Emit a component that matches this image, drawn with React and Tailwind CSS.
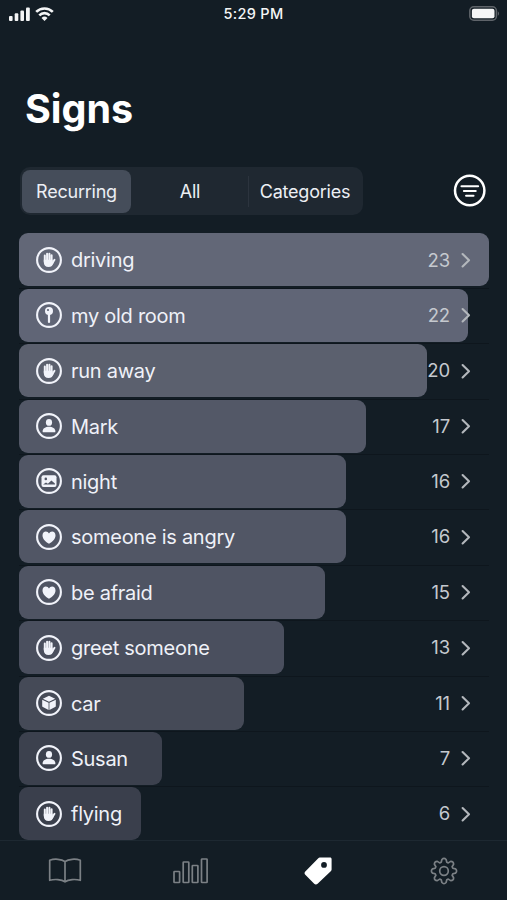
import React, { useState } from 'react';

const signs = [
  { name: 'driving', count: 23, type: 'action', color: 'bg-[#626777]' },
  { name: 'my old room', count: 22, type: 'place', color: 'bg-[#606576]' },
  { name: 'run away', count: 20, type: 'action', color: 'bg-[#5b606e]' },
  { name: 'Mark', count: 17, type: 'person', color: 'bg-[#535867]' },
  { name: 'night', count: 16, type: 'scene', color: 'bg-[#515665]' },
  { name: 'someone is angry', count: 16, type: 'emotion', color: 'bg-[#515665]' },
  { name: 'be afraid', count: 15, type: 'emotion', color: 'bg-[#4f5463]' },
  { name: 'greet someone', count: 13, type: 'action', color: 'bg-[#4a4f5e]' },
  { name: 'car', count: 11, type: 'object', color: 'bg-[#454a57]' },
  { name: 'Susan', count: 7, type: 'person', color: 'bg-[#3c414e]' },
  { name: 'flying', count: 6, type: 'action', color: 'bg-[#3a3f4c]' },
];

const maxCount = 23;

const glyphs = {
  action: (
    <g stroke="currentColor" strokeLinecap="round" fill="none">
      <path d="M8.8 8.400v6M11.100 6.700v7M13.400 6.700v7M15.600 8.200v6" strokeWidth="2" />
      <path d="M18.500 12.700l-2.300 3.900" strokeWidth="1.900" />
      <path d="M7.800 12.800h8.800v2.800l1.200-.4c-1 3.200-2.400 4.900-5.200 4.900-3.100 0-4.800-1.800-4.800-4.900z" fill="currentColor" stroke="none" />
    </g>
  ),
  place: (
    <g>
      <circle cx="13" cy="9" r="4" fill="currentColor" />
      <circle cx="12" cy="8" r="1.100" fill="#606576" />
      <path d="M13 12v8" stroke="currentColor" strokeWidth="2.200" strokeLinecap="round" />
    </g>
  ),
  person: (
    <g fill="currentColor">
      <ellipse cx="13" cy="9.400" rx="3.100" ry="3.400" />
      <path d="M6.600 18.400c0-2.900 2.900-4.600 6.400-4.600s6.400 1.700 6.400 4.600c0 .6-.3.900-.9.900H7.500c-.6 0-.9-.3-.9-.9z" />
    </g>
  ),
  scene: (
    <g>
      <rect x="5.500" y="7.200" width="15" height="11.800" rx="2" fill="currentColor" />
      <circle cx="9.800" cy="10.900" r="1.300" fill="#515665" />
      <path d="M7.100 16.600l2.900-2.100 1.900 1.200 3.500-3.300 3.500 3.100v1.100z" fill="#515665" />
    </g>
  ),
  emotion: (
    <path
      d="M13 19.800c-3.300-2.100-6.500-4.900-6.500-8.400 0-2.200 1.500-3.900 3.400-3.900 1.300 0 2.500.7 3.100 2 .6-1.300 1.800-2 3.100-2 1.900 0 3.400 1.700 3.400 3.900 0 3.500-3.200 6.300-6.500 8.400z"
      fill="currentColor"
    />
  ),
  object: (
    <g fill="currentColor">
      <path d="M13 5.800l6.200 3L13 11.800 6.800 8.800z" />
      <path d="M6.200 9.700l6.400 3v7.300l-5.700-2.900c-.4-.2-.7-.6-.7-1.100z" />
      <path d="M19.800 9.700l-6.400 3v7.300l5.700-2.900c.4-.2.7-.6.7-1.100z" />
    </g>
  ),
};

const SignIcon = ({ type }) => (
  <svg width="26" height="26" viewBox="0 0 26 26" className="shrink-0 text-[#f1f3fa]">
    <circle cx="13" cy="13" r="11.900" fill="none" stroke="currentColor" strokeWidth="2.100" />
    {glyphs[type]}
  </svg>
);

const StatusBar = () => (
  <div className="grid grid-cols-3 items-center h-[27px] pl-[9px] pr-[7px] text-[#f4f5f6]">
    <div className="flex items-center gap-[5px]">
      <svg width="21" height="14" viewBox="0 0 21 14" fill="currentColor">
        <rect x="0" y="9" width="3.600" height="5" rx="1" />
        <rect x="5.700" y="6.300" width="3.600" height="7.700" rx="1" />
        <rect x="11.400" y="3.500" width="3.600" height="10.500" rx="1" />
        <rect x="17" y="0.500" width="3.800" height="13.500" rx="1" />
      </svg>
      <svg width="19" height="14" viewBox="0 0 19 14" fill="none" stroke="currentColor" strokeWidth="2.600">
        <path d="M1.200 4.900a11.700 11.700 0 0 1 16.600 0" />
        <path d="M4.300 8.300a7.400 7.400 0 0 1 10.400 0" />
        <path d="M9.500 14l-3-3.100a4.300 4.300 0 0 1 6 0z" fill="currentColor" stroke="none" />
      </svg>
    </div>
    <span className="-ml-[2px] text-center text-[14.5px] font-medium tracking-[0.3px]">5:29 PM</span>
    <svg width="31" height="15" viewBox="0 0 31 15" className="justify-self-end">
      <rect x="0.800" y="0.800" width="26.600" height="13.400" rx="4" fill="none" stroke="#5f646a" strokeWidth="1.500" />
      <rect x="2.900" y="2.700" width="22.600" height="9.600" rx="2" fill="currentColor" />
      <path d="M28.800 5.200c1.600.7 1.600 3.900 0 4.600z" fill="#5f646a" />
    </svg>
  </div>
);

const tabs = ['Recurring', 'All', 'Categories'];

const App = () => {
  const [tab, setTab] = useState('Recurring');

  return (
    <div className="flex flex-col w-full h-[900px] overflow-hidden bg-[#131d25] font-['Inter','Liberation_Sans',sans-serif]">
      <StatusBar />

      <h1 className="mt-[56px] pl-[25px] text-[39.5px] leading-[52px] font-bold tracking-[0px] text-white">Signs</h1>

      {/* Segmented control */}
      <div className="flex items-center justify-between mt-[32px] pl-[20px] pr-[21px] h-[48px]">
        <div className="grid grid-cols-[109px_118px_112px] items-center h-[48px] w-[343px] p-[2px] rounded-[10px] bg-[#1f2831]">
          {tabs.map((name) => (
            <button
              key={name}
              onClick={() => setTab(name)}
              className={`h-[43px] rounded-[8px] text-[18px] tracking-[-0.22px] text-[#eceff4] ${
                tab === name ? 'bg-[#454d5a]' : ''
              } ${name === 'All' ? 'relative after:absolute after:right-0 after:top-[6px] after:h-[31px] after:w-px after:bg-[#2c343e]' : ''}`}
            >
              {name}
            </button>
          ))}
        </div>
        <button className="-mt-[2px]">
          <svg width="33" height="33" viewBox="0 0 33 33" fill="none" stroke="white" strokeLinecap="round">
            <circle cx="16.700" cy="16.500" r="14.700" strokeWidth="2.500" />
            <path d="M8.500 12.200h16.600M10.900 17h11.800M13.100 21.800h7.400" strokeWidth="2.100" />
          </svg>
        </button>
      </div>

      {/* Signs with their frequency bars */}
      <div className="flex-1 min-h-0 mt-[18.400px] pl-[19px] pr-[18.500px]">
        {signs.map((sign) => (
          <div key={sign.name} className="grid h-[55.4px] grid-rows-[53px] border-b border-[#0e161d]">
            <div
              className={`col-start-1 row-start-1 rounded-[9px] ${sign.color}`}
              style={{ width: `${(sign.count / maxCount) * 100}%` }}
            />
            <div className="col-start-1 row-start-1 flex items-center pl-[17px] pr-[17.500px]">
              <SignIcon type={sign.type} />
              <span className="ml-[9px] mt-px flex-1 text-[20px] tracking-[-0.27px] text-[#eff1f8]">{sign.name}</span>
              <span className="mt-px text-[18.500px] tracking-[-0.1px] text-[#c5c9cf]">{sign.count}</span>
              <svg width="10" height="16" viewBox="0 0 10 16" className="ml-[11px] shrink-0" fill="none" stroke="#b3b7bc" strokeWidth="2.100">
                <path d="M1.600 2l6.400 6.200-6.400 6.200" strokeLinecap="round" strokeLinejoin="round" />
              </svg>
            </div>
          </div>
        ))}
      </div>

      {/* Tab bar */}
      <nav className="grid grid-cols-4 h-[60px] shrink-0 border-t border-[#1d2831] bg-[#131d25] text-[#7b8085]">
        <button className="flex justify-center pt-[17px] pl-[3px]">
          <svg width="34" height="26" viewBox="0 0 34 26" fill="none" stroke="currentColor" strokeWidth="1.700" strokeLinejoin="round">
            <path d="M17 3.700C13.500 .9 6.500 .6 1.700 2.200V22.300C6.500 21 13.500 21.200 17 23.800c3.500-2.600 10.500-2.800 15.300-1.500V2.200C27.500 .6 20.500 .9 17 3.700zM17 3.700V23.800" />
          </svg>
        </button>
        <button className="flex justify-center pt-[16px] pl-[2px]">
          <svg width="36" height="27" viewBox="0 0 36 27" fill="none" stroke="currentColor" strokeWidth="1.700">
            <rect x="1" y="14.500" width="5.600" height="11" rx="0.600" />
            <rect x="10.200" y="5" width="5.600" height="20.500" rx="0.600" />
            <rect x="19.300" y="8.500" width="5.600" height="17" rx="0.600" />
            <rect x="28.500" y="2" width="5.600" height="23.500" rx="0.600" />
          </svg>
        </button>
        <button className="flex justify-center pt-[16px] pl-[2px] text-white">
          <svg width="28" height="28" viewBox="0 0 28 28">
            <path
              fillRule="evenodd"
              fill="currentColor"
              d="M15.800.6h10.300c.9 0 1.500.6 1.500 1.500v10.300c0 .6-.2 1.100-.6 1.500L13.600 26.700c-1 1-2.400 1-3.400 0l-8.900-8.900c-1-1-1-2.400 0-3.400L14.300 1.200c.4-.4.900-.6 1.500-.6zM20 5a2.900 2.900 0 1 0 0 5.800A2.900 2.900 0 0 0 20 5z"
            />
          </svg>
        </button>
        <button className="flex justify-center pt-[16px]">
          <svg width="28" height="28" viewBox="0 0 28 28" fill="none" stroke="currentColor" strokeWidth="1.700" strokeLinejoin="round">
            <path d="M11.900 2.500Q14 .3 16.100 2.500L16.800 5.200 18.300 5.900 20.700 4.400Q23.700 4.300 23.600 7.300L22.100 9.700 22.800 11.200 25.500 11.900Q27.700 14 25.500 16.100L22.800 16.800 22.100 18.300 23.600 20.700Q23.700 23.700 20.700 23.600L18.300 22.100 16.800 22.800 16.100 25.500Q14 27.700 11.900 25.500L11.200 22.800 9.700 22.100 7.300 23.600Q4.300 23.700 4.400 20.700L5.900 18.300 5.200 16.800 2.500 16.100Q.3 14 2.500 11.900L5.200 11.200 5.900 9.700 4.400 7.300Q4.300 4.300 7.300 4.400L9.700 5.900 11.200 5.200z" />
            <circle cx="14" cy="14" r="4.300" />
          </svg>
        </button>
      </nav>
    </div>
  );
};

export default App;
